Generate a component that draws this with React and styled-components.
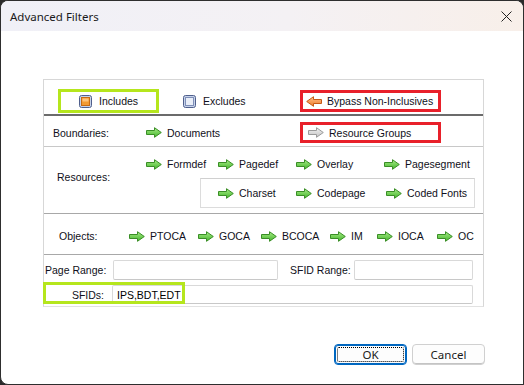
import React from 'react';
import styled, { createGlobalStyle } from 'styled-components';

const Global = createGlobalStyle`
  html, body { margin: 0; padding: 0; background: #2a2a2a; }
  * { box-sizing: border-box; }
`;

const Window = styled.div`
  width: 524px;
  height: 385px;
  background: #ffffff;
  border: 1px solid #2e2e2e;
  border-radius: 8px 8px 0 8px;
  overflow: hidden;
  display: flex;
  flex-direction: column;
  font-family: "Liberation Sans", Arial, sans-serif;
`;

const TitleBar = styled.div`
  height: 30px;
  flex: none;
  display: flex;
  align-items: center;
  justify-content: space-between;
  padding: 0 9px 0 9px;
  background: linear-gradient(90deg, #f0f0f7 0%, #f4f1f4 55%, #f8efe9 100%);
  font-family: "Noto Sans", "Open Sans", sans-serif;
  font-size: 11.5px;
  color: #1a1a1a;
`;

const Close = styled.svg`
  width: 11px;
  height: 11px;
  margin-right: 2px;
`;

const Body = styled.div`
  flex: 1;
  display: flex;
  flex-direction: column;
  padding: 48px 40px 0 42px;
`;

const Panel = styled.div`
  border: 1px solid #d7d7d7;
  border-bottom-color: #e2e2e2;
  width: 441px;
  font-size: 10.5px;
  color: #101020;
`;

const Row = styled.div`
  display: flex;
  align-items: center;
  height: ${({ h }) => h}px;
  padding-left: ${({ pl }) => pl || 0}px;
  padding-top: ${({ pt }) => pt || 0}px;
  border-bottom: ${({ line }) => line || 'none'};
`;

const Cell = styled.div`
  flex: none;
  width: ${({ w }) => (w ? `${w}px` : 'auto')};
  padding-left: ${({ pl }) => pl || 0}px;
  display: flex;
  align-items: center;
  white-space: nowrap;
`;

const Mark = styled.div`
  flex: none;
  display: flex;
  align-items: center;
  white-space: nowrap;
  height: ${({ h }) => h}px;
  width: ${({ w }) => w}px;
  border: 3px solid ${({ color }) => color};
  padding-left: ${({ pl }) => pl}px;
`;

const Label = styled.span`
  margin-left: ${({ gap }) => gap || 0}px;
`;

const ResBlock = styled.div`
  display: flex;
  align-items: center;
  height: 67px;
  border-bottom: 1px solid #a8a8a8;
`;

const ResLabel = styled.div`
  width: 102px;
  padding-left: 13px;
  margin-bottom: 6px;
`;

const ResLines = styled.div`
  display: flex;
  flex-direction: column;
  align-self: stretch;
`;

const ResLine = styled.div`
  display: flex;
  align-items: center;
  height: 31px;
  padding-top: 3px;
`;

const SubBox = styled.div`
  display: flex;
  align-items: center;
  margin-left: 54px;
  width: 275px;
  height: 30px;
  border: 1px solid #dcdcdc;
  border-top-color: #d0d0d0;
  padding-left: 17px;
`;

const FieldLabel = styled.div`
  flex: none;
  width: ${({ w }) => w}px;
  padding-left: ${({ pl }) => pl || 0}px;
  text-align: ${({ right }) => (right ? 'right' : 'left')};
  padding-right: ${({ right }) => (right ? 8 : 0)}px;
`;

const Input = styled.div`
  flex: none;
  width: ${({ w }) => w}px;
  height: ${({ h }) => h || 20}px;
  border: 1px solid #d9d9d9;
  border-bottom-color: #c8c8c8;
  border-radius: 2px;
  background: #fff;
  display: flex;
  align-items: center;
  padding-left: 4px;
  color: #000;
`;

const SfidRow = styled.div`
  position: relative;
  display: flex;
  align-items: center;
  height: 24px;
  padding-top: 1px;
`;

const Highlight = styled.div`
  position: absolute;
  left: -1px;
  top: 0;
  width: 142px;
  height: 22px;
  border: 3px solid #b5e61d;
  pointer-events: none;
`;

const Footer = styled.div`
  display: flex;
  justify-content: flex-end;
  gap: 5px;
  margin-top: auto;
  margin-bottom: 19px;
  margin-right: -2px;
`;

const Button = styled.button`
  position: relative;
  width: 73px;
  height: 21px;
  border-radius: 4px;
  font-family: "Noto Sans", "Open Sans", sans-serif;
  font-size: 11.5px;
  color: #1a1a1a;
  background: #fdfdfd;
  border: 1px solid ${({ primary }) => (primary ? '#0067c0' : '#d0d0d0')};
  box-shadow: ${({ primary }) => (primary ? 'inset 0 0 0 1px #0067c0' : 'inset 0 -1px 0 #c4c4c4')};
  padding: 0;
  line-height: 18px;
  &::after {
    content: '';
    display: ${({ primary }) => (primary ? 'block' : 'none')};
    position: absolute;
    inset: 2px;
    border: 1px dotted #000;
    border-radius: 2px;
  }
`;

const Arrow = ({ kind = 'green', left }) => {
  const pal = {
    green: ['#a6ec86', '#45b52c', '#3a8e26'],
    orange: ['#ffc08a', '#ef7d2a', '#c65a16'],
    gray: ['#f2f2f2', '#c4c4c4', '#9a9a9a'],
  }[kind];
  const id = `g-${kind}`;
  return (
    <svg width="16" height="11" viewBox="0 0 16 11" style={{ flex: 'none', transform: left ? 'scaleX(-1)' : 'none' }}>
      <defs>
        <linearGradient id={id} x1="0" y1="0" x2="0" y2="1">
          <stop offset="0" stopColor={pal[0]} />
          <stop offset="1" stopColor={pal[1]} />
        </linearGradient>
      </defs>
      <path d="M0.5 3.5 H8.5 V0.7 L15.3 5.5 L8.5 10.3 V7.5 H0.5 Z" fill={`url(#${id})`} stroke={pal[2]} strokeWidth="1" strokeLinejoin="round" />
    </svg>
  );
};

const Check = ({ on }) => (
  <svg width="13" height="13" viewBox="0 0 13 13" style={{ flex: 'none' }}>
    <rect x="0.5" y="0.5" width="12" height="12" rx="2" fill="#c6d2ea" stroke="#4f5f8c" />
    <rect x="2.5" y="2.5" width="8" height="8" fill={on ? '#f39a32' : '#e9eef8'} stroke={on ? '#c86a14' : '#7f8fb8'} />
    {on && <rect x="3.5" y="3.5" width="6" height="3" fill="#ffc27a" />}
  </svg>
);

const Item = ({ w, kind, left, children }) => (
  <Cell w={w}>
    <Arrow kind={kind} left={left} />
    <Label gap={5}>{children}</Label>
  </Cell>
);

export default function App() {
  return (
    <>
      <Global />
      <Window>
        <TitleBar>
          <span>Advanced Filters</span>
          <Close viewBox="0 0 11 11">
            <path d="M0.5 0.5 L10.5 10.5 M10.5 0.5 L0.5 10.5" stroke="#222" strokeWidth="1" />
          </Close>
        </TitleBar>
        <Body>
          <Panel>
            <Row h={36} pl={14} pt={8} line="2px solid #6b6b6b">
              <Mark color="#b5e61d" w={101} h={24} pl={18}>
                <Check on />
                <Label gap={7}>Includes</Label>
              </Mark>
              <Cell w={141} pl={24}>
                <Check />
                <Label gap={7}>Excludes</Label>
              </Cell>
              <Mark color="#e8202a" w={141} h={22} pl={3}>
                <Arrow kind="orange" left />
                <Label gap={5}>Bypass Non-Inclusives</Label>
              </Mark>
            </Row>
            <Row h={31} pl={9} pt={3} line="1px solid #c8c8c8">
              <Cell w={93}>Boundaries:</Cell>
              <Item w={154}>Documents</Item>
              <Mark color="#e8202a" w={141} h={21} pl={5}>
                <Arrow kind="gray" />
                <Label gap={5}>Resource Groups</Label>
              </Mark>
            </Row>
            <ResBlock>
              <ResLabel>Resources:</ResLabel>
              <ResLines>
                <ResLine>
                  <Item w={72}>Formdef</Item>
                  <Item w={78}>Pagedef</Item>
                  <Item w={88}>Overlay</Item>
                  <Item>Pagesegment</Item>
                </ResLine>
                <SubBox>
                  <Item w={78}>Charset</Item>
                  <Item w={90}>Codepage</Item>
                  <Item>Coded Fonts</Item>
                </SubBox>
              </ResLines>
            </ResBlock>
            <Row h={41} pl={15} pt={4} line="1px solid #a8a8a8">
              <Cell w={70}>Objects:</Cell>
              <Item w={69}>PTOCA</Item>
              <Item w={63}>GOCA</Item>
              <Item w={69}>BCOCA</Item>
              <Item w={47}>IM</Item>
              <Item w={60}>IOCA</Item>
              <Item>OC</Item>
            </Row>
            <Row h={27} pl={1} pt={3}>
              <FieldLabel w={68}>Page Range:</FieldLabel>
              <Input w={165} />
              <FieldLabel w={76} pl={12}>SFID Range:</FieldLabel>
              <Input w={119} />
            </Row>
            <SfidRow>
              <FieldLabel w={68} right>SFIDs:</FieldLabel>
              <Input w={361} h={19}>IPS,BDT,EDT</Input>
              <Highlight />
            </SfidRow>
          </Panel>
          <Footer>
            <Button primary>OK</Button>
            <Button>Cancel</Button>
          </Footer>
        </Body>
      </Window>
    </>
  );
}
